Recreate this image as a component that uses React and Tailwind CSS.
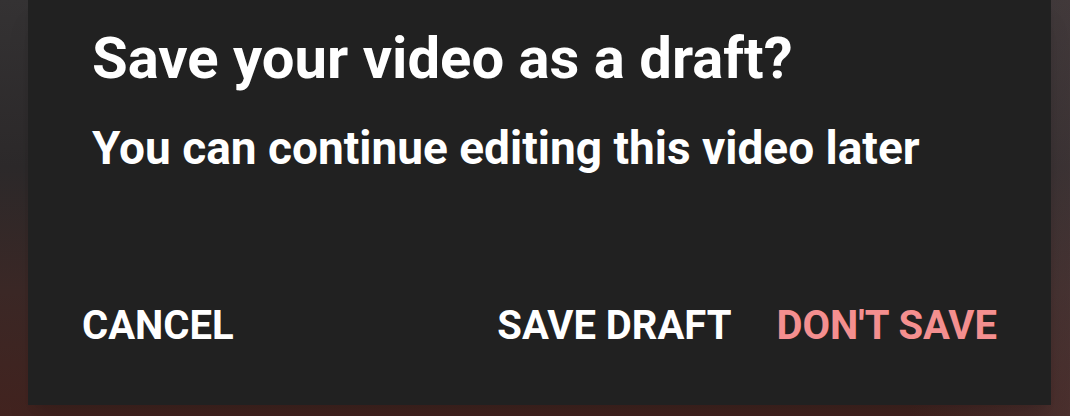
const App = () => {
    return (
        <div
            className="w-[1070px] h-[416px] overflow-hidden bg-[linear-gradient(90deg,transparent_0%,transparent_85%,rgba(90,70,72,0.35)_100%),linear-gradient(180deg,#343233_0%,#2c292a_40%,#3b2826_70%,#42231f_100%)]"
            style={{ fontFamily: 'Roboto, "Noto Sans", sans-serif' }}
        >
            {/* Dialog */}
            <div className="ml-[28px] w-[1023px] h-[405px] bg-[#212121] flex flex-col shadow-xl">
                <div className="pl-[64px] pr-[40px] pt-[22px]">
                    <h2 className="text-white font-bold text-[58px] leading-[72px]">
                        Save your video as a draft?
                    </h2>
                    <p className="text-white font-bold text-[46px] leading-[56px] mt-[26px]">
                        You can continue editing this video later
                    </p>
                </div>

                <div className="mt-auto mb-[55px] flex items-center px-[54px]">
                    <button className="text-white font-bold text-[40px] leading-[48px] uppercase">
                        Cancel
                    </button>
                    <div className="ml-auto flex items-center gap-[45px]">
                        <button className="text-white font-bold text-[40px] leading-[48px] uppercase">
                            Save draft
                        </button>
                        <button className="text-[#f48f8f] font-bold text-[40px] leading-[48px] uppercase">
                            Don't save
                        </button>
                    </div>
                </div>
            </div>
        </div>
    );
};

export default App;
